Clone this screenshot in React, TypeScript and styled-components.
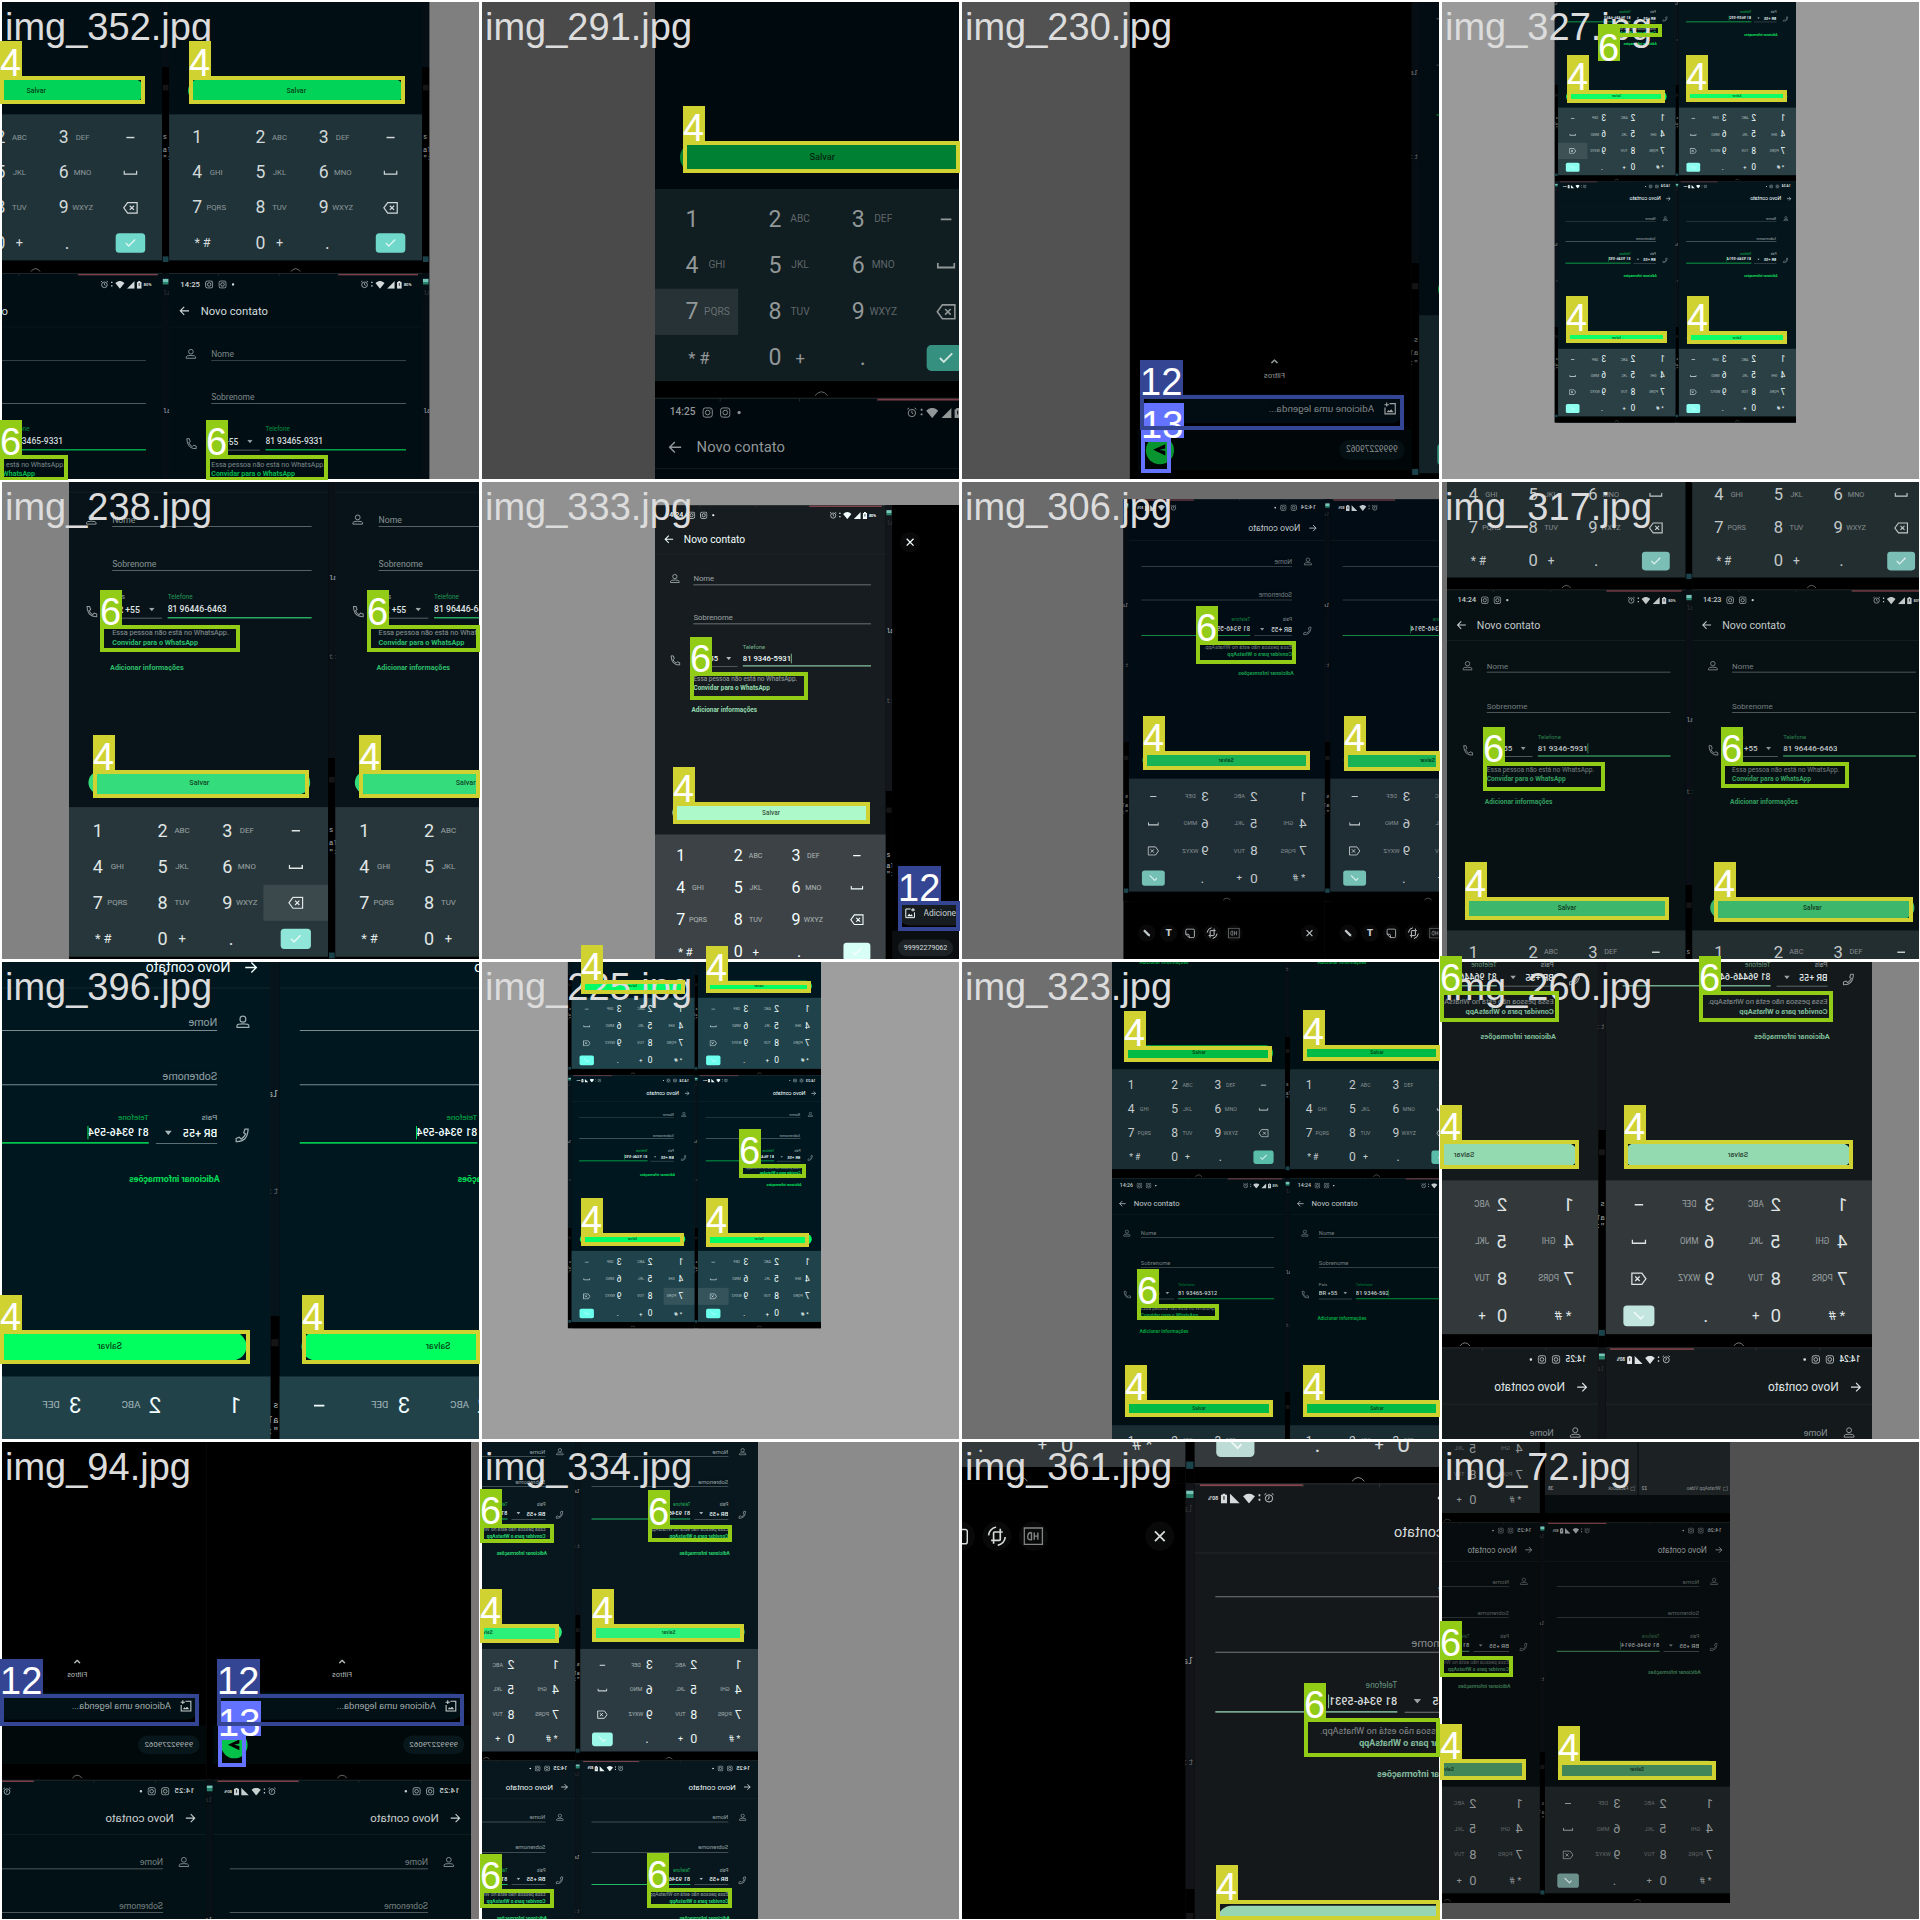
import React from "react";
import styled, { createGlobalStyle, css, ThemeProvider } from "styled-components";

/* ---------- palette of one sample ---------- */

interface Palette {
  backdrop: string;
  bg: string;
  pad: string;
  green: string;
  enter: string;
  ink: string;
}

declare module "styled-components" {
  export interface DefaultTheme extends Palette {}
}

const GlobalStyle = createGlobalStyle`
  * { box-sizing: border-box; }
  body { margin: 0; background: #fff; }
  button, input, select {
    margin: 0; padding: 0; border: 0; border-radius: 0; background: none;
    color: inherit; font: inherit; appearance: none; outline: none;
  }
`;

/* ---------- mosaic ---------- */

const Mosaic = styled.main`
  display: grid;
  grid-template-columns: repeat(4, minmax(0, 1fr));
`;

const Tile = styled.figure`
  position: relative;
  margin: 0;
  aspect-ratio: 1;
  font-family: "Liberation Sans", Arial, sans-serif;
  font-size: 38px;
  line-height: 44px;
`;

const Picture = styled.div`
  position: relative;
  height: 100%;
  overflow: hidden;
  background: ${(p) => p.theme.backdrop};
  &::after {
    content: "";
    position: absolute;
    inset: 0;
    border: solid #fff;
    border-width: 2px 1px 1px 2px;
  }
`;

const FileName = styled.figcaption`
  position: absolute;
  top: 5px;
  left: 5px;
  color: #dcdcdc;
  white-space: nowrap;
`;

const Box = styled.div<{ $color: string }>`
  position: absolute;
  border: 4px solid ${(p) => p.$color};
`;

const Tag = styled.span<{ $color: string; $inside?: boolean }>`
  position: absolute;
  left: -4px;
  ${(p) => (p.$inside ? "top: -2px;" : "bottom: calc(100% + 4px);")}
  height: 35px;
  padding-right: 1px;
  background: ${(p) => p.$color};
  color: #fff;
`;

/* The stage holds the screens at their own size; zoom and flip are those of the sample. */
const Stage = styled.div<{ $x: number; $y: number; $scale: number; $flip: boolean; $cols: number }>`
  position: absolute;
  top: 0;
  left: 0;
  display: grid;
  grid-template-columns: repeat(${(p) => p.$cols}, 370px);
  grid-auto-rows: 740px;
  transform-origin: 0 0;
  transform: translate(${(p) => p.$x}px, ${(p) => p.$y}px)
    scale(${(p) => (p.$flip ? -p.$scale : p.$scale)}, ${(p) => p.$scale});
  font-family: Roboto, "Noto Sans", sans-serif;
  font-size: 12px;
  line-height: 14px;
  color: ${(p) => p.theme.ink};
`;

const Cell = styled.div`
  display: grid;
  grid-template-columns: 360px 10px;
  background: #000;
`;

/* ---------- phone chrome ---------- */

const Screen = styled.section`
  display: flex;
  flex-direction: column;
  background: ${(p) => p.theme.bg};
`;

const Segments = styled.div`
  display: grid;
  grid-template-columns: 71px 86px 84px 113px;
  height: 4px;
  border-top: 1px solid #8884;
`;

const Segment = styled.i<{ $hot?: boolean }>`
  border-right: ${(p) => (p.$hot ? "0" : "1px solid #8884")};
  ${(p) => p.$hot && css`height: 2px; background: #d0606c; opacity: 0.6;`}
`;

const Status = styled.div`
  display: flex;
  align-items: center;
  gap: 7px;
  height: 24px;
  padding: 0 15px 0 16px;
  font-size: 11px;
  font-weight: 500;
`;

const StatusIcons = styled.div`
  display: flex;
  align-items: center;
  gap: 3px;
  margin-left: auto;
  font-size: 6px;
  font-weight: 700;
`;

const Header = styled.header`
  display: flex;
  align-items: center;
  gap: 16px;
  height: 49px;
  padding: 3px 0 0 14px;
  border-bottom: 1px solid #8882;
  font-size: 16px;
  line-height: 20px;
`;

const IconButton = styled.button`
  display: grid;
  place-items: center;
`;

const NavBar = styled.div`
  display: grid;
  place-items: center;
  height: 18px;
  margin-top: auto;
  padding-top: 7px;
  background: #000;
`;

const Margin = styled.aside`
  overflow: hidden;
  background: linear-gradient(color-mix(in srgb, ${(p) => p.theme.bg} 60%, #0e0e16) 446px, #000 0);
  font-family: "Liberation Mono", monospace;
  font-size: 10px;
  line-height: 10px;
  padding-top: 8px;
  white-space: nowrap;
`;

const Scrap = styled.div<{ $gap: number; $fill?: string; $ink?: string }>`
  width: 8px;
  height: 8px;
  margin: 0 0 ${(p) => p.$gap}px 1px;
  background: ${(p) => p.$fill ?? "none"};
  color: ${(p) => p.$ink ?? p.theme.ink};
  opacity: 0.75;
`;

/* ---------- contact form ---------- */

const Form = styled.div`
  height: 387px;
  padding: 28px 23px 0 0;
`;

const FieldRow = styled.label<{ $gap: number }>`
  display: grid;
  grid-template-columns: 60px 1fr;
  align-items: center;
  margin-bottom: ${(p) => p.$gap}px;
  svg { margin-left: 23px; opacity: 0.65; }
`;

const TextInput = styled.input`
  width: 100%;
  height: 20px;
  border-bottom: 1px solid color-mix(in srgb, ${(p) => p.theme.ink} 50%, transparent);
  &::placeholder { color: ${(p) => p.theme.ink}; opacity: 0.58; }
`;

const PhoneRow = styled.div`
  display: grid;
  grid-template-columns: 60px 69px 208px;
  align-items: end;
  > svg { margin: 0 0 1px 23px; opacity: 0.65; }
  > label + label { margin-left: 8px; }
`;

const Labelled = styled.label<{ $active?: boolean }>`
  display: flex;
  flex-direction: column;
  font-size: 9px;
  line-height: 12px;
  color: ${(p) => (p.$active ? p.theme.green : p.theme.ink)};
  > span { opacity: 0.65; }
`;

const Line = styled.div<{ $active?: boolean }>`
  display: flex;
  align-items: center;
  justify-content: space-between;
  height: 24px;
  padding-right: 10px;
  font-size: 12px;
  font-weight: 500;
  color: ${(p) => p.theme.ink};
  border-bottom: 1px solid color-mix(in srgb, ${(p) => p.theme.ink} 50%, transparent);
  ${(p) =>
    p.$active &&
    css`
      justify-content: flex-start;
      padding: 0;
      border-bottom: 2px solid color-mix(in srgb, ${p.theme.green} 75%, transparent);
    `}
`;

const Country = styled.select`
  width: 42px;
`;

const NumberInput = styled.input`
  field-sizing: content;
`;

const Caret = styled.i`
  width: 1px;
  height: 15px;
  background: ${(p) => p.theme.green};
`;

const Notice = styled.div`
  margin: 13px 0 0 60px;
  font-size: 10px;
  line-height: 14px;
  white-space: nowrap;
  span { opacity: 0.58; }
`;

const Link = styled.a`
  display: block;
  font-size: 10px;
  font-weight: 700;
  line-height: 14px;
  text-decoration: none;
  color: ${(p) => p.theme.green};
  opacity: 0.85;
`;

const MoreLink = styled(Link)<{ $gap: number }>`
  margin: ${(p) => p.$gap}px 0 0 57px;
`;

const Save = styled.button`
  flex: none;
  height: 32px;
  margin: 0 25px 18px 27px;
  border-radius: 16px;
  background: ${(p) => p.theme.green};
  color: #000b;
  font-size: 10px;
  font-weight: 500;
`;

/* ---------- keypad ---------- */

const Keypad = styled.div`
  display: grid;
  grid-template-columns: repeat(4, 1fr);
  grid-auto-rows: 50px;
  padding-top: 8px;
  background: ${(p) => p.theme.pad};
`;

const Key = styled.button<{ $pressed?: boolean; $center?: boolean }>`
  display: flex;
  align-items: center;
  justify-content: ${(p) => (p.$center ? "center" : "flex-start")};
  padding-left: ${(p) => (p.$center ? 0 : 32)}px;
  background: ${(p) => (p.$pressed ? "#ffffff18" : "none")};
`;

const Digit = styled.span`
  width: 16px;
  font-size: 25px;
  line-height: 30px;
  text-align: center;
`;

const Letters = styled.span`
  width: 38px;
  font-size: 11px;
  text-align: center;
  opacity: 0.6;
`;

const Sign = styled.span`
  padding-left: 4px;
  font-size: 18px;
  line-height: 24px;
`;

const Plus = styled(Sign)`
  padding-left: 14px;
`;

const Enter = styled.span`
  display: grid;
  place-items: center;
  width: 42px;
  height: 28px;
  border-radius: 5px;
  background: ${(p) => p.theme.enter};
`;

/* ---------- media preview ---------- */

const Preview = styled.section`
  display: flex;
  flex-direction: column;
  background: #000;
`;

const Tools = styled.div`
  display: flex;
  align-items: center;
  gap: 8px;
  height: 116px;
  padding: 0 17px 0 12px;
`;

const Tool = styled.button`
  display: grid;
  place-items: center;
  width: 32px;
  height: 32px;
  border-radius: 16px;
  background: #8881;
  font-size: 18px;
  font-weight: 900;
  &:first-child { margin-right: auto; }
`;

const Filters = styled.button`
  display: flex;
  flex-direction: column;
  align-items: center;
  gap: 9px;
  margin-top: 456px;
  font-size: 10px;
  line-height: 12px;
  opacity: 0.9;
`;

const CaptionBar = styled.label`
  display: flex;
  align-items: center;
  gap: 12px;
  height: 38px;
  margin: 19px 9px 8px;
  padding: 0 10px;
  border-radius: 19px;
  background: ${(p) => p.theme.bg};
  font-size: 13px;
  input { flex: 1; }
  input::placeholder { color: ${(p) => p.theme.ink}; opacity: 0.8; }
`;

const SendBar = styled.div`
  display: flex;
  align-items: center;
  justify-content: space-between;
  height: 54px;
  padding: 0 11px 0 9px;
  background: color-mix(in srgb, ${(p) => p.theme.bg} 50%, #000);
`;

const Chip = styled.span`
  padding: 6px 9px;
  border-radius: 13px;
  background: color-mix(in srgb, ${(p) => p.theme.bg} 75%, ${(p) => p.theme.pad});
  font-size: 11px;
  opacity: 0.85;
`;

const Send = styled.button`
  display: grid;
  place-items: center;
  width: 37px;
  height: 37px;
  border-radius: 19px;
  background: ${(p) => p.theme.green};
`;

/* ---------- gallery ---------- */

const Gallery = styled.section`
  display: grid;
  grid-template-columns: 178px 1fr;
  grid-template-rows: 687px 35px 18px;
  column-gap: 2px;
  background: ${(p) => p.theme.bg};
`;

const Album = styled.a`
  display: flex;
  align-items: center;
  gap: 4px;
  padding: 660px 6px 0 4px;
  background: ${(p) => p.theme.pad};
  color: inherit;
  font-size: 9px;
  text-decoration: none;
  b { margin-left: auto; }
`;

const GalleryFoot = styled.div`
  grid-row: 3;
  grid-column: 1 / -1;
  background: #000;
`;

/* ---------- icons ---------- */

interface IconProps {
  w: number;
  h?: number;
  box?: string;
  children: React.ReactNode;
}

const Icon = ({ w, h = w, box = "0 0 24 24", children }: IconProps) => (
  <svg width={w} height={h} viewBox={box} fill="none" stroke="currentColor" strokeWidth={2} aria-hidden>
    {children}
  </svg>
);

const Camera = () => (
  <Icon w={12}>
    <rect x="2" y="2" width="20" height="20" rx="5" />
    <circle cx="12" cy="12" r="5" />
    <path d="M17 6h1" />
  </Icon>
);

const StatusBar = ({ time }: { time: string }) => (
  <Status>
    <span>{time}</span>
    <Camera />
    <Camera />
    <Icon w={4}><circle cx="12" cy="12" r="10" fill="currentColor" /></Icon>
    <StatusIcons>
      <Icon w={12}>
        <circle cx="12" cy="13" r="8" />
        <path d="M12 8v5l3 2M2 5l4-3M22 5l-4-3" />
      </Icon>
      <Icon w={3} h={10} box="0 0 3 10"><path d="M1.500 1v2M1.500 6v2" /></Icon>
      <Icon w={14} h={11} box="0 0 13 11"><path d="M0 3Q6.500-3 13 3L6.500 11Z" fill="currentColor" stroke="none" /></Icon>
      <Icon w={11} box="0 0 11 11"><path d="M0 11 11 0V11Z" fill="currentColor" stroke="none" /></Icon>
      <Icon w={7} h={11} box="0 0 7 11">
        <path d="M0 1.500H2V0H5V1.500H7V11H0Z" fill="currentColor" stroke="none" />
        <path d="M3.500 3v4" stroke="#000" strokeWidth={1} />
      </Icon>
      <span>80%</span>
    </StatusIcons>
  </Status>
);

const MarginScraps = () => (
  <Margin>
    <Scrap $gap={8} $fill="linear-gradient(#9fe 50%, #3a8 50%)" />
    <Scrap $gap={160} $ink="#444">la</Scrap>
    <Scrap $gap={102}>la</Scrap>
    <Scrap $gap={162} $ink="#777">t:</Scrap>
    <Scrap $gap={62} $fill="#1c1c20" />
    <Scrap $gap={10}>s</Scrap>
    <Scrap $gap={4}>al</Scrap>
    <Scrap $gap={136}>":</Scrap>
    <Scrap $gap={0} $fill="#245a66" />
  </Margin>
);

/* ---------- screens ---------- */

interface Contact {
  kind?: "contact";
  time?: string;
  number?: string;
  caret?: boolean;
  notice?: boolean;
  pressed?: string;
}
type View = Contact | { kind: "preview" } | { kind: "gallery" };

const DIGITS: [string, string][] = [
  ["1", ""], ["2", "ABC"], ["3", "DEF"], ["-", ""],
  ["4", "GHI"], ["5", "JKL"], ["6", "MNO"], ["space", ""],
  ["7", "PQRS"], ["8", "TUV"], ["9", "WXYZ"], ["back", ""],
];

const KEY_ICONS: Record<string, React.ReactNode> = {
  "-": <Icon w={12} h={4} box="0 0 12 4"><path d="M0 2h12" /></Icon>,
  space: <Icon w={20} h={7} box="0 0 20 7"><path d="M1 0v5h18V0" /></Icon>,
  back: (
    <Icon w={22} h={18} box="0 0 22 18">
      <path d="M7 1.500H20.500V16.500H7L1.500 9ZM10 6l6 6M16 6l-6 6" strokeWidth={1.700} />
    </Icon>
  ),
};

const Dialer = ({ pressed }: { pressed?: string }) => (
  <Keypad>
    {DIGITS.map(([key, letters]) =>
      KEY_ICONS[key] ? (
        <Key key={key} $center $pressed={pressed === key} aria-label={key}>{KEY_ICONS[key]}</Key>
      ) : (
        <Key key={key} $pressed={pressed === key}>
          <Digit>{key}</Digit>
          {letters && <Letters>{letters}</Letters>}
        </Key>
      ),
    )}
    <Key><Sign>*</Sign><Sign>#</Sign></Key>
    <Key><Digit>0</Digit><Plus>+</Plus></Key>
    <Key $center><Digit>.</Digit></Key>
    <Key $center aria-label="OK">
      <Enter><Icon w={20}><path d="m4 12 5 5L20 6" stroke="#fff" strokeWidth={2.500} opacity={0.75} /></Icon></Enter>
    </Key>
  </Keypad>
);

const Home = () => (
  <NavBar>
    <Icon w={16} h={6} box="0 0 16 6"><path d="M1 6Q8-3 15 6" strokeWidth={1} opacity={0.7} /></Icon>
  </NavBar>
);

const ContactScreen = ({ time = "14:25", number = "81 9346-5931", caret, notice, pressed }: Contact) => (
  <Screen>
    <Segments><Segment /><Segment /><Segment /><Segment $hot /></Segments>
    <StatusBar time={time} />
    <Header>
      <IconButton aria-label="Voltar">
        <Icon w={15}><path d="M23 12H3M12 3l-9 9 9 9" strokeWidth={2.500} /></Icon>
      </IconButton>
      Novo contato
    </Header>
    <Form>
      <FieldRow $gap={41}>
        <Icon w={16}>
          <circle cx="12" cy="7" r="5" />
          <path d="M2 21v-3q0-3 10-3t10 3v3Z" />
        </Icon>
        <TextInput placeholder="Nome" />
      </FieldRow>
      <FieldRow $gap={30}>
        <span />
        <TextInput placeholder="Sobrenome" />
      </FieldRow>
      <PhoneRow>
        <Icon w={17}>
          <path d="M3 2h5l2 6-3 2q2 5 7 8l3-3 5 2v5Q4 23 3 2Z" />
        </Icon>
        <Labelled>
          <span>País</span>
          <Line>
            <Country defaultValue="BR"><option value="BR">BR +55</option></Country>
            <Icon w={8} h={5} box="0 0 8 5"><path d="M0 0h8L4 5Z" fill="currentColor" stroke="none" opacity={0.7} /></Icon>
          </Line>
        </Labelled>
        <Labelled $active>
          <span>Telefone</span>
          <Line $active>
            <NumberInput type="tel" defaultValue={number} />
            {caret && <Caret />}
          </Line>
        </Labelled>
      </PhoneRow>
      {notice && (
        <Notice>
          <span>Essa pessoa não está no WhatsApp.</span>
          <Link href="#convidar">Convidar para o WhatsApp</Link>
        </Notice>
      )}
      <MoreLink href="#informacoes" $gap={notice ? 20 : 33}>Adicionar informações</MoreLink>
    </Form>
    <Save>Salvar</Save>
    <Dialer pressed={pressed} />
    <Home />
  </Screen>
);

const PreviewScreen = () => (
  <Preview>
    <Tools>
      <Tool aria-label="Fechar"><Icon w={16}><path d="m4 4 16 16M20 4 4 20" strokeWidth={3} /></Icon></Tool>
      <Tool aria-label="HD">
        <Icon w={22} h={20} box="0 0 22 20">
          <path d="M1 1h20v18H1ZM6 6v8M6 10h4M10 6v8M13 6v8q5 0 4-4 0-4-4-4" strokeWidth={1.500} opacity={0.6} />
        </Icon>
      </Tool>
      <Tool aria-label="Girar">
        <Icon w={22}>
          <rect x="8" y="7" width="8" height="10" rx="1" />
          <path d="M8 3v4H5M16 21v-4h3M2 13q1 8 9 10M22 11q-1-8-9-10" />
        </Icon>
      </Tool>
      <Tool aria-label="Figurinha">
        <Icon w={19}><path d="M5 2h14q3 0 3 3v9l-8 8H5q-3 0-3-3V5q0-3 3-3ZM14 22v-5q0-3 3-3h5" /></Icon>
      </Tool>
      <Tool>T</Tool>
      <Tool aria-label="Desenhar">
        <Icon w={18}><path d="m4 20 1-5L17 3l4 4L9 19Z" fill="currentColor" stroke="none" /></Icon>
      </Tool>
    </Tools>
    <Filters>
      <Icon w={10} h={6} box="0 0 10 6"><path d="m1 5 4-4 4 4" /></Icon>
      Filtros
    </Filters>
    <CaptionBar>
      <Icon w={18}>
        <path d="M13 3H3v18h18V10M18 1v7M14 5h8" />
        <path d="m6 18 4-5 3 3 2-2 3 4Z" fill="currentColor" stroke="none" />
      </Icon>
      <input placeholder="Adicione uma legenda..." />
    </CaptionBar>
    <SendBar>
      <Chip>99992279062</Chip>
      <Send aria-label="Enviar"><Icon w={20}><path d="m3 3 19 9-19 9V14l9-2-9-2Z" fill="#000" stroke="none" /></Icon></Send>
    </SendBar>
    <Home />
  </Preview>
);

const Folder = () => <Icon w={10}><path d="M2 4h7l2 3h11v14H2Z" /></Icon>;

const GalleryScreen = () => (
  <Gallery>
    <Album href="#video"><Folder />WhatsApp Video<b>22</b></Album>
    <Album href="#facebook"><Folder />Facebook<b>38</b></Album>
    <GalleryFoot />
  </Gallery>
);

const renderView = (view: View) => {
  if (view.kind === "preview") return <PreviewScreen />;
  if (view.kind === "gallery") return <GalleryScreen />;
  return <ContactScreen {...view} />;
};

/* ---------- data ---------- */

const CLASS_COLORS: Record<number, string> = { 4: "#cfd231", 6: "#92cc17", 12: "#344593", 13: "#6473ff" };

/* class, left, top, right, bottom, tag drawn inside */
type Detection = [number, number, number, number, number, boolean?];

interface Sample {
  file: string;
  palette: Palette;
  x: number;
  y: number;
  scale: number;
  flip?: boolean;
  views: View[][];
  boxes: Detection[];
}

const palette = (backdrop: string, bg: string, pad: string, green: string, enter: string, ink: string): Palette => ({
  backdrop, bg, pad, green, enter, ink,
});

const plain: Contact = {};
const preview: View = { kind: "preview" };
const known: Contact = { number: "81 9346-5931", caret: true, notice: true };
const whats: Contact = { number: "81 96446-6463", notice: true };

const SAMPLES: Sample[] = [
  {
    file: "img_352.jpg",
    palette: palette("#7f7f7f", "#010f15", "#203338", "#00d357", "#70d8ca", "#d3d9da"),
    x: -91, y: -247, scale: 0.703,
    views: [[plain, plain], [{ number: "81 93465-9331", notice: true }, { number: "81 93465-9331", notice: true }]],
    boxes: [[4, 0, 76, 145, 104], [4, 189, 76, 405, 104], [6, 0, 455, 68, 481], [6, 206, 455, 328, 481]],
  },
  {
    file: "img_291.jpg",
    palette: palette("#4a4a4a", "#00090d", "#101d21", "#008033", "#36907f", "#929798"),
    x: 175, y: -286, scale: 0.924,
    views: [[{ pressed: "7" }], [plain]],
    boxes: [[4, 203, 141, 480, 173]],
  },
  {
    file: "img_230.jpg",
    palette: palette("#525252", "#010d12", "#132226", "#08952f", "#36907f", "#a0a5a6"),
    x: 733, y: -76, scale: 0.761, flip: true,
    views: [[plain, preview], [plain, plain]],
    boxes: [[13, 181, 438, 211, 473], [12, 180, 395, 444, 430]],
  },
  {
    file: "img_327.jpg",
    palette: palette("#9a9a9a", "#05151c", "#2a4045", "#0fff66", "#8dfff0", "#f2ffff"),
    x: 356, y: -60, scale: 0.326, flip: true,
    views: [
      [{ number: "81 9659-592", caret: true }, { ...whats, pressed: "back" }],
      [{ time: "14:24", number: "81 9346-5914", caret: true }, { time: "14:24", number: "81 9346-592", caret: true }],
    ],
    boxes: [
      [6, 158, 24, 222, 37, true], [4, 127, 90, 225, 103], [4, 246, 90, 347, 102],
      [4, 126, 331, 227, 343], [4, 247, 331, 347, 344],
    ],
  },
  {
    file: "img_238.jpg",
    palette: palette("#828282", "#071318", "#27363a", "#35dc7b", "#8fe6d8", "#e0e6e6"),
    x: 69, y: -43, scale: 0.72,
    views: [[{ ...whats, pressed: "back" }, whats]],
    boxes: [[6, 100, 145, 240, 172], [6, 367, 145, 480, 172], [4, 93, 290, 309, 318], [4, 359, 290, 480, 318]],
  },
  {
    file: "img_333.jpg",
    palette: palette("#919191", "#161c1f", "#3c4245", "#adf9c9", "#d8fff5", "#f4ffff"),
    x: 175, y: 25, scale: 0.641,
    views: [[{ ...known, time: "14:24" }, preview]],
    boxes: [[6, 210, 192, 328, 220], [4, 193, 322, 390, 344], [12, 418, 421, 480, 451]],
  },
  {
    file: "img_306.jpg",
    palette: palette("#6b6b6b", "#010c14", "#1f2d34", "#19b254", "#74c0b5", "#c2c9cc"),
    x: 566, y: 19, scale: 0.544, flip: true,
    views: [
      [{ time: "14:24", number: "81 9346-5914", caret: true }, { ...known, time: "14:24" }],
      [preview, preview],
    ],
    boxes: [[6, 236, 161, 336, 184], [4, 183, 271, 350, 290], [4, 384, 271, 480, 291]],
  },
  {
    file: "img_317.jpg",
    palette: palette("#6e6e6e", "#071114", "#232e31", "#3db76b", "#7abeb5", "#c3c9c9"),
    x: 7, y: -381, scale: 0.663,
    views: [[plain, plain], [{ ...known, time: "14:24" }, { ...whats, time: "14:23" }]],
    boxes: [[6, 43, 282, 165, 311], [6, 281, 282, 409, 308], [4, 25, 417, 229, 440], [4, 274, 417, 473, 442]],
  },
  {
    file: "img_396.jpg",
    palette: palette("#8a8a8a", "#00171f", "#22424a", "#00ff5f", "#70fff0", "#f2ffff"),
    x: 599, y: -40, scale: 0.888, flip: true,
    views: [[{ number: "81 9346-594", caret: true }, { number: "81 9346-594", caret: true }]],
    boxes: [[4, 0, 370, 250, 404], [4, 302, 370, 480, 404]],
  },
  {
    file: "img_225.jpg",
    palette: palette("#9e9e9e", "#00171f", "#20424a", "#00ff65", "#6cffee", "#f2ffff"),
    x: 341, y: -138, scale: 0.342, flip: true,
    views: [
      [plain, plain],
      [{ ...whats, time: "14:23", pressed: "back" }, { time: "14:24", number: "81 9346-592", caret: true, pressed: "7" }],
    ],
    boxes: [
      [4, 101, 20, 205, 34], [4, 226, 21, 331, 33], [6, 259, 204, 326, 218],
      [4, 101, 273, 204, 286], [4, 226, 273, 329, 287],
    ],
  },
  {
    file: "img_323.jpg",
    palette: palette("#6f6f6f", "#011015", "#1a2d32", "#00bb45", "#5abdaa", "#c4cbcc"),
    x: 152, y: -138, scale: 0.481,
    views: [
      [plain, plain],
      [{ time: "14:26", number: "81 93465-9312", notice: true }, { time: "14:24", number: "81 9346-592", caret: true }],
    ],
    boxes: [
      [4, 164, 86, 312, 102], [4, 343, 85, 480, 101], [6, 177, 344, 259, 360],
      [4, 165, 440, 313, 457], [4, 343, 440, 480, 457],
    ],
  },
  {
    file: "img_260.jpg",
    palette: palette("#848484", "#14191c", "#33383b", "#93dab0", "#c2e5df", "#dfe3e3"),
    x: 432, y: -160, scale: 0.74, flip: true,
    views: [[whats, whats], [{ time: "14:24" }, plain]],
    boxes: [[6, 0, 31, 119, 62], [6, 259, 31, 393, 62], [4, 0, 180, 139, 209], [4, 184, 180, 413, 209]],
  },
  {
    file: "img_94.jpg",
    palette: palette("#7a7674", "#011115", "#203338", "#04c24a", "#70d8ca", "#c8cfcf"),
    x: 471, y: -190, scale: 0.716, flip: true,
    views: [[preview, preview], [plain, plain]],
    boxes: [[12, 0, 254, 199, 286], [13, 218, 296, 246, 327], [12, 217, 254, 464, 286]],
  },
  {
    file: "img_334.jpg",
    palette: palette("#8b8b8b", "#07171d", "#2c3b41", "#2cf07a", "#9cf8e8", "#eaf4f4"),
    x: 278, y: -45, scale: 0.494, flip: true,
    views: [[known, known], [known, known]],
    boxes: [
      [6, 0, 84, 74, 103], [6, 168, 85, 252, 102], [4, 0, 184, 79, 203], [4, 112, 184, 264, 202],
      [6, 0, 449, 74, 468], [6, 167, 448, 252, 468],
    ],
  },
  {
    file: "img_361.jpg",
    palette: palette("#8a8a8a", "#14181b", "#34393c", "#97d5b3", "#bddcd5", "#d6dada"),
    x: 562, y: -630, scale: 0.91, flip: true,
    views: [[plain, plain], [known, preview]],
    boxes: [[6, 344, 278, 480, 317], [4, 256, 460, 480, 480]],
  },
  {
    file: "img_72.jpg",
    palette: palette("#505050", "#070c0e", "#1c2124", "#428559", "#6b908b", "#8f9495"),
    x: 290, y: -298, scale: 0.514, flip: true,
    views: [
      [{ kind: "gallery" }, plain],
      [{ time: "14:26", number: "81 9346-5914", caret: true }, { ...known, time: "14:25" }],
    ],
    boxes: [[6, 0, 216, 73, 237], [4, 0, 319, 86, 340], [4, 118, 321, 276, 340]],
  },
];

const SampleTile = ({ sample }: { sample: Sample }) => (
  <ThemeProvider theme={sample.palette}>
    <Tile>
      <Picture>
        <Stage
          $x={sample.x}
          $y={sample.y}
          $scale={sample.scale}
          $flip={!!sample.flip}
          $cols={sample.views[0].length}
        >
          {sample.views.flat().map((view, i) => (
            <Cell key={i}>
              {renderView(view)}
              {view.kind !== "preview" && view.kind !== "gallery" && <MarginScraps />}
            </Cell>
          ))}
        </Stage>
      </Picture>
      <FileName>{sample.file}</FileName>
      {sample.boxes.map(([id, left, top, right, bottom, inside], i) => (
        <Box key={i} $color={CLASS_COLORS[id]} style={{ left, top, width: right - left, height: bottom - top }}>
          <Tag $color={CLASS_COLORS[id]} $inside={inside}>{id}</Tag>
        </Box>
      ))}
    </Tile>
  </ThemeProvider>
);

export default function App() {
  return (
    <>
      <GlobalStyle />
      <Mosaic>
        {SAMPLES.map((sample) => (
          <SampleTile key={sample.file} sample={sample} />
        ))}
      </Mosaic>
    </>
  );
}
